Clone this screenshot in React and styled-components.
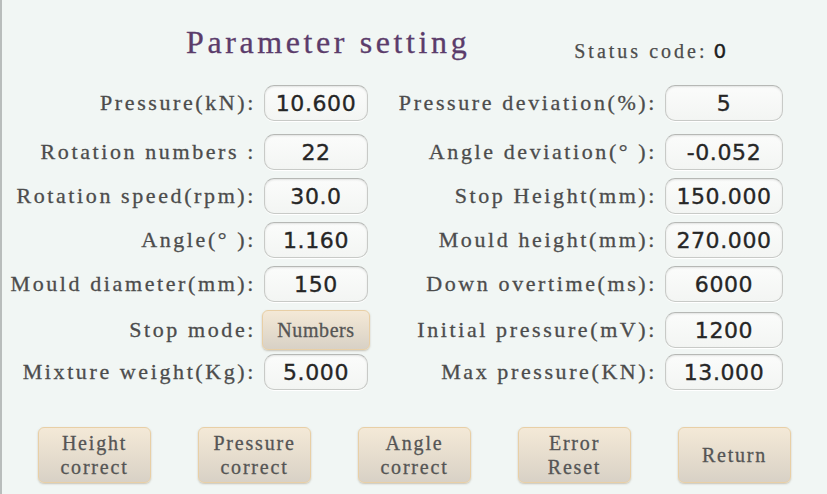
import React from "react";
import styled, { createGlobalStyle } from "styled-components";

const GlobalStyle = createGlobalStyle`
  html, body {
    margin: 0;
    padding: 0;
    background: #f1f6f4;
  }
  * {
    box-sizing: border-box;
  }
`;

const Screen = styled.div`
  width: 827px;
  height: 494px;
  display: flex;
  flex-direction: column;
  background: #f1f6f4;
  border-left: 2px solid #b9bdbc;
  font-family: "Liberation Serif", "DejaVu Serif", serif;
  color: #4c4c4c;
  overflow: hidden;
`;

const Header = styled.div`
  height: 85px;
  display: flex;
  align-items: flex-start;
  padding: 24px 0 0 184px;
`;

const Title = styled.h1`
  margin: 0;
  font-family: inherit;
  font-weight: normal;
  font-size: 32px;
  letter-spacing: 3.6px;
  line-height: 36px;
  color: #5b3c6b;
  -webkit-text-stroke: 0.3px #5b3c6b;
`;

const Status = styled.div`
  margin: 16px 0 0 104px;
  font-size: 20px;
  letter-spacing: 3px;
  line-height: 22px;
  display: flex;
  align-items: baseline;
  gap: 6px;
  -webkit-text-stroke: 0.25px #4c4c4c;
`;

const StatusValue = styled.span`
  font-family: "DejaVu Sans", "Open Sans", sans-serif;
  font-size: 20px;
  letter-spacing: 0;
  color: #1e1e1e;
  -webkit-text-stroke: 0.35px #1e1e1e;
`;

const Form = styled.div`
  display: flex;
  flex-direction: column;
  gap: 8px;
`;

const Row = styled.div`
  display: grid;
  grid-template-columns: 262px 104px 297px 118px;
  align-items: center;
  height: 36px;
  margin-bottom: ${(p) => (p.$spaced ? "5px" : "0")};
`;

const Label = styled.div`
  text-align: right;
  padding-right: 8px;
  font-size: 22px;
  letter-spacing: 2.6px;
  white-space: nowrap;
  line-height: 24px;
  -webkit-text-stroke: 0.3px #4c4c4c;
`;

const ValueBox = styled.div`
  height: 36px;
  display: flex;
  align-items: center;
  justify-content: center;
  border: 1px solid #c8cac7;
  border-top-color: #b6b8b5;
  border-radius: 10px;
  background: linear-gradient(#fbfcfb, #f3f5f3);
  box-shadow: inset 0 1px 2px rgba(0, 0, 0, 0.1), 0 1px 0 #fff;
  font-family: "DejaVu Sans", "Open Sans", sans-serif;
  font-size: 22px;
  letter-spacing: 0.6px;
  color: #262626;
  -webkit-text-stroke: 0.35px #262626;
`;

const TanButton = styled.button`
  display: flex;
  align-items: center;
  justify-content: center;
  width: ${(p) => p.$width || "113px"};
  height: ${(p) => p.$height || "56px"};
  margin: ${(p) => p.$margin || "0"};
  padding: 0;
  border: 1px solid #e8cfa6;
  border-radius: 6px;
  background: linear-gradient(#f4e9d7, #e5dccd 55%, #d8d1c6);
  box-shadow: 0 1px 2px rgba(120, 100, 70, 0.35);
  font-family: "Liberation Serif", "DejaVu Serif", serif;
  font-size: 20px;
  letter-spacing: ${(p) => p.$spacing || "1.8px"};
  line-height: 24px;
  color: #555;
  -webkit-text-stroke: 0.3px #555;
  text-align: center;
  cursor: pointer;
`;

const Footer = styled.div`
  margin-top: auto;
  display: flex;
  gap: 47px;
  padding: 0 0 11px 36px;
`;

const left = [
  ["Pressure(kN):", "10.600"],
  ["Rotation numbers :", "22"],
  ["Rotation speed(rpm):", "30.0"],
  ["Angle(° ):", "1.160"],
  ["Mould diameter(mm):", "150"],
  ["Stop mode:", null],
  ["Mixture weight(Kg):", "5.000"],
];

const right = [
  ["Pressure deviation(%):", "5"],
  ["Angle deviation(° ):", "-0.052"],
  ["Stop Height(mm):", "150.000"],
  ["Mould height(mm):", "270.000"],
  ["Down overtime(ms):", "6000"],
  ["Initial pressure(mV):", "1200"],
  ["Max pressure(KN):", "13.000"],
];

const actions = [
  ["Height", "correct"],
  ["Pressure", "correct"],
  ["Angle", "correct"],
  ["Error", "Reset"],
  ["Return"],
];

export default function App() {
  return (
    <>
      <GlobalStyle />
      <Screen>
        <Header>
          <Title>Parameter setting</Title>
          <Status>
            Status code:<StatusValue>0</StatusValue>
          </Status>
        </Header>
        <Form>
          {left.map(([label, value], i) => (
            <Row key={label} $spaced={i === 0}>
              <Label>{label}</Label>
              {value === null ? (
                <TanButton
                  $width="108px"
                  $height="40px"
                  $margin="0 -2px"
                  $spacing="0.6px"
                >
                  Numbers
                </TanButton>
              ) : (
                <ValueBox>{value}</ValueBox>
              )}
              <Label>{right[i][0]}</Label>
              <ValueBox>{right[i][1]}</ValueBox>
            </Row>
          ))}
        </Form>
        <Footer>
          {actions.map((lines) => (
            <TanButton key={lines.join(" ")}>
              <span>
                {lines.map((line, i) => (
                  <React.Fragment key={line}>
                    {i > 0 && <br />}
                    {line}
                  </React.Fragment>
                ))}
              </span>
            </TanButton>
          ))}
        </Footer>
      </Screen>
    </>
  );
}
